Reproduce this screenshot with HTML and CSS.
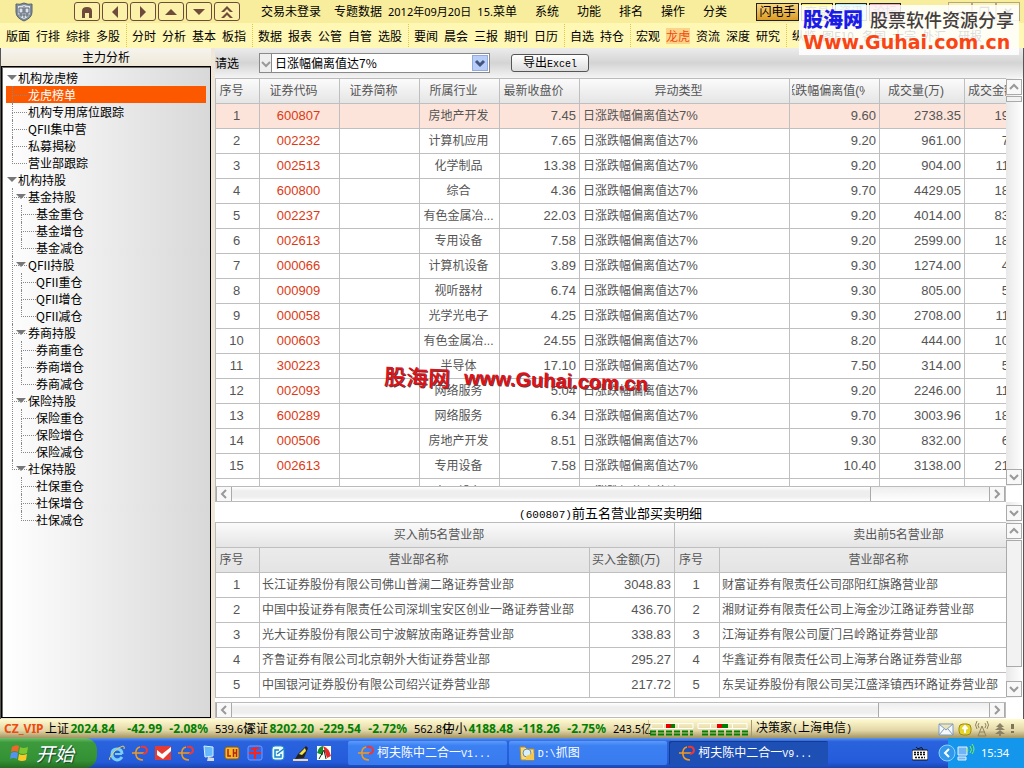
FILE: index.html
```html
<!DOCTYPE html>
<html lang="zh-CN">
<head>
<meta charset="utf-8">
<title>主力分析</title>
<link rel="stylesheet" href="styles.css">
</head>
<body>
<div class="app">
<header class="topbar">
  <svg class="shield" viewBox="0 0 20 20"><path d="M2 2Q6 3 10 1q4 2 8 1v8q0 6-8 9Q2 16 2 10z" fill="#7f8d9b" stroke="#59636f"/><path d="M4 4q4 0 6-1 3 1 6 1v6q0 5-6 7-6-2-6-7z" fill="#dde3ea"/><path d="M5 6h4v5H5zM11 6h4v5h-4zM7 11v4M13 11v4M5 13h10M10 4v12" fill="none" stroke="#5b6775"/></svg>
  <nav class="navbuttons">
    <button aria-label="首页"><svg viewBox="0 0 24 16"><path d="M7 14V7q0-4 5-4t5 4v7h-3V9h-4v5z"/></svg></button>
    <button aria-label="后退"><svg viewBox="0 0 24 16"><path d="M15 2v12L9 8z"/></svg></button>
    <button aria-label="前进"><svg viewBox="0 0 24 16"><path d="M9 2v12l6-6z"/></svg></button>
    <button aria-label="上翻"><svg viewBox="0 0 24 16"><path d="M6 11h12l-6-6z"/></svg></button>
    <button aria-label="下翻"><svg viewBox="0 0 24 16"><path d="M6 5h12l-6 6z"/></svg></button>
    <button aria-label="顶部"><svg viewBox="0 0 24 16"><path d="M6 8l6-6 6 6h-3l-3-3-3 3zM6 14l6-6 6 6h-3l-3-3-3 3z"/></svg></button>
  </nav>
  <div class="notice"><span>交易未登录</span><span>专题数据</span><time>2012年09月20日</time><span>15.</span></div>
  <nav class="menu"><a href="#">菜单</a><a href="#">系统</a><a href="#">功能</a><a href="#">排名</a><a href="#">操作</a><a href="#">分类</a></nav>
  <div class="quick"><button class="flash">闪电手</button><button class="yellow">交易</button><button class="cyan">资讯</button><button class="pink">论坛</button></div>
  <div class="winbuttons"><button aria-label="最小化">–</button><button aria-label="还原">❐</button><button aria-label="关闭">✕</button></div>
</header>
<nav class="shortcuts">
  <div><a href="#">版面</a><a href="#">行排</a><a href="#">综排</a><a href="#">多股</a></div>
  <div><a href="#">分时</a><a href="#">分析</a><a href="#">基本</a><a href="#">板指</a></div>
  <div><a href="#">数据</a><a href="#">报表</a><a href="#">公管</a><a href="#">自管</a><a href="#">选股</a></div>
  <div><a href="#">要闻</a><a href="#">晨会</a><a href="#">三报</a><a href="#">期刊</a><a href="#">日历</a></div>
  <div><a href="#">自选</a><a href="#">持仓</a></div>
  <div><a href="#">宏观</a><a href="#" class="active">龙虎</a><a href="#">资流</a><a href="#">深度</a><a href="#">研究</a></div>
  <div><a href="#">纵览</a><a href="#" class="wide">图F10</a><a href="#">各国</a><a href="#">大宗</a><a href="#" class="last">外汇</a><a href="#">研报</a></div>
</nav>
<aside class="brand"><div class="brand-row"><b>股海网</b><span>股票软件资源分享</span></div><strong>Www.Guhai.com.cn</strong></aside>

<div class="body">
<aside class="side">
  <h1>主力分析</h1>
  <div class="treebox">
  <ul class="tree">
    <li><span class="node open">机构龙虎榜</span>
      <ul><li class="selected"><span class="node">龙虎榜单</span></li><li><span class="node">机构专用席位跟踪</span></li><li><span class="node">QFII集中营</span></li><li><span class="node">私募揭秘</span></li><li><span class="node">营业部跟踪</span></li></ul></li>
    <li><span class="node open">机构持股</span>
      <ul>
        <li><span class="node open">基金持股</span><ul><li><span class="node">基金重仓</span></li><li><span class="node">基金增仓</span></li><li><span class="node">基金减仓</span></li></ul></li>
        <li><span class="node open">QFII持股</span><ul><li><span class="node">QFII重仓</span></li><li><span class="node">QFII增仓</span></li><li><span class="node">QFII减仓</span></li></ul></li>
        <li><span class="node open">券商持股</span><ul><li><span class="node">券商重仓</span></li><li><span class="node">券商增仓</span></li><li><span class="node">券商减仓</span></li></ul></li>
        <li><span class="node open">保险持股</span><ul><li><span class="node">保险重仓</span></li><li><span class="node">保险增仓</span></li><li><span class="node">保险减仓</span></li></ul></li>
        <li><span class="node open">社保持股</span><ul><li><span class="node">社保重仓</span></li><li><span class="node">社保增仓</span></li><li><span class="node">社保减仓</span></li></ul></li>
      </ul></li>
  </ul>
  </div>
</aside>

<main class="main">
  <form class="filter">
    <label for="rule">请选</label>
    <div class="combo"><span class="stub"><svg viewBox="0 0 11 18"><path d="M2 8l4 4 4-4" fill="none" stroke="#999" stroke-width="2"/></svg></span>
    <select id="rule"><option>日涨幅偏离值达7%</option></select>
    <span class="drop"><svg viewBox="0 0 14 14"><path d="M3 5l4 4 4-4" fill="none" stroke="#40557f" stroke-width="3"/></svg></span></div>
    <button type="button">导出<span class="m">Excel</span></button>
  </form>

  <section class="pane upper">
    <div class="clip">
    <table class="grid">
      <colgroup><col class="w44"><col class="w80"><col class="w80"><col class="w80"><col class="w80"><col class="w210"><col class="w90"><col class="w85"><col class="w48"></colgroup>
      <thead><tr><th>序号</th><th>证券代码</th><th>证券简称</th><th>所属行业</th><th>最新收盘价</th><th>异动类型</th><th><div class="crop">涨跌幅偏离值(%)</div></th><th>成交量(万)</th><th class="start">成交金额</th></tr></thead>
      <tbody>
      <tr class="current"><td>1</td><td>600807</td><td></td><td>房地产开发</td><td>7.45</td><td>日涨跌幅偏离值达<i>7%</i></td><td>9.60</td><td>2738.35</td><td>19</td></tr>
      <tr><td>2</td><td>002232</td><td></td><td>计算机应用</td><td>7.65</td><td>日涨跌幅偏离值达<i>7%</i></td><td>9.20</td><td>961.00</td><td>7</td></tr>
      <tr><td>3</td><td>002513</td><td></td><td>化学制品</td><td>13.38</td><td>日涨跌幅偏离值达<i>7%</i></td><td>9.20</td><td>904.00</td><td>11</td></tr>
      <tr><td>4</td><td>600800</td><td></td><td>综合</td><td>4.36</td><td>日涨跌幅偏离值达<i>7%</i></td><td>9.70</td><td>4429.05</td><td>18</td></tr>
      <tr><td>5</td><td>002237</td><td></td><td>有色金属冶...</td><td>22.03</td><td>日涨跌幅偏离值达<i>7%</i></td><td>9.20</td><td>4014.00</td><td>83</td></tr>
      <tr><td>6</td><td>002613</td><td></td><td>专用设备</td><td>7.58</td><td>日涨跌幅偏离值达<i>7%</i></td><td>9.20</td><td>2599.00</td><td>18</td></tr>
      <tr><td>7</td><td>000066</td><td></td><td>计算机设备</td><td>3.89</td><td>日涨跌幅偏离值达<i>7%</i></td><td>9.30</td><td>1274.00</td><td>4</td></tr>
      <tr><td>8</td><td>000909</td><td></td><td>视听器材</td><td>6.74</td><td>日涨跌幅偏离值达<i>7%</i></td><td>9.30</td><td>805.00</td><td>5</td></tr>
      <tr><td>9</td><td>000058</td><td></td><td>光学光电子</td><td>4.25</td><td>日涨跌幅偏离值达<i>7%</i></td><td>9.30</td><td>2708.00</td><td>11</td></tr>
      <tr><td>10</td><td>000603</td><td></td><td>有色金属冶...</td><td>24.55</td><td>日涨跌幅偏离值达<i>7%</i></td><td>8.20</td><td>444.00</td><td>10</td></tr>
      <tr><td>11</td><td>300223</td><td></td><td>半导体</td><td>17.10</td><td>日涨跌幅偏离值达<i>7%</i></td><td>7.50</td><td>314.00</td><td>5</td></tr>
      <tr><td>12</td><td>002093</td><td></td><td>网络服务</td><td>5.04</td><td>日涨跌幅偏离值达<i>7%</i></td><td>9.20</td><td>2246.00</td><td>11</td></tr>
      <tr><td>13</td><td>600289</td><td></td><td>网络服务</td><td>6.34</td><td>日涨跌幅偏离值达<i>7%</i></td><td>9.70</td><td>3003.96</td><td>18</td></tr>
      <tr><td>14</td><td>000506</td><td></td><td>房地产开发</td><td>8.51</td><td>日涨跌幅偏离值达<i>7%</i></td><td>9.30</td><td>832.00</td><td>6</td></tr>
      <tr><td>15</td><td>002613</td><td></td><td>专用设备</td><td>7.58</td><td>日涨跌幅偏离值达<i>7%</i></td><td>10.40</td><td>3138.00</td><td>21</td></tr>
      <tr><td></td><td></td><td></td><td>专用设备</td><td></td><td>日涨跌幅偏离值达</td><td></td><td></td><td></td></tr>
      </tbody>
    </table>
    </div>
    <div class="vbar"><span class="cap"><svg viewBox="0 0 14 14"><path d="M3 9l4-4 4 4"/></svg></span><span class="thumb short"></span><span class="cap end"><svg viewBox="0 0 14 14"><path d="M3 5l4 4 4-4"/></svg></span></div>
    <div class="mark"><b>股海网</b><strong>www.Guhai.com.cn</strong></div>
  </section>
  <div class="hbar"><span class="cap"><svg viewBox="0 0 14 14"><path d="M9 3L5 7l4 4"/></svg></span><span class="thumb first"></span><span class="cap end"><svg viewBox="0 0 14 14"><path d="M5 3l4 4-4 4"/></svg></span></div>
  <div class="caption"><h2><span class="m">(600807)</span>前五名营业部买卖明细</h2><div class="vbar"><span class="cap end"><svg viewBox="0 0 14 14"><path d="M3 5l4 4 4-4"/></svg></span></div></div>
  <section class="pane lower">
    <div class="clip">
    <table class="grid detail">
      <colgroup><col class="w44"><col class="w330"><col class="w85"><col class="w45"><col class="w330"><col class="w85"></colgroup>
      <thead><tr><th colspan="3">买入前5名营业部</th><th colspan="3">卖出前5名营业部</th></tr>
      <tr class="sub"><th>序号</th><th>营业部名称</th><th>买入金额(万)</th><th>序号</th><th>营业部名称</th><th></th></tr></thead>
      <tbody>
      <tr><td>1</td><td>长江证券股份有限公司佛山普澜二路证券营业部</td><td>3048.83</td><td>1</td><td>财富证券有限责任公司邵阳红旗路营业部</td><td></td></tr>
      <tr><td>2</td><td>中国中投证券有限责任公司深圳宝安区创业一路证券营业部</td><td>436.70</td><td>2</td><td>湘财证券有限责任公司上海金沙江路证券营业部</td><td></td></tr>
      <tr><td>3</td><td>光大证券股份有限公司宁波解放南路证券营业部</td><td>338.83</td><td>3</td><td>江海证券有限公司厦门吕岭路证券营业部</td><td></td></tr>
      <tr><td>4</td><td>齐鲁证券有限公司北京朝外大街证券营业部</td><td>295.27</td><td>4</td><td>华鑫证券有限责任公司上海茅台路证券营业部</td><td></td></tr>
      <tr><td>5</td><td>中国银河证券股份有限公司绍兴证券营业部</td><td>217.72</td><td>5</td><td>东吴证券股份有限公司吴江盛泽镇西环路证券营业部</td><td></td></tr>
      </tbody>
    </table>
    </div>
    <div class="vbar"><span class="cap"><svg viewBox="0 0 14 14"><path d="M3 9l4-4 4 4"/></svg></span><span class="thumb long"></span><span class="cap end"><svg viewBox="0 0 14 14"><path d="M3 5l4 4 4-4"/></svg></span></div>
  </section>
  <div class="hbar"><span class="cap"><svg viewBox="0 0 14 14"><path d="M9 3L5 7l4 4"/></svg></span><span class="thumb second"></span><span class="cap end"><svg viewBox="0 0 14 14"><path d="M5 3l4 4-4 4"/></svg></span></div>
</main>
</div>

<footer class="status">
  <b class="vip">CZ_VIP</b>
  <div class="quote"><span>上证</span><b class="v">2024.84</b><b class="d">-42.99</b><b class="p">-2.08%</b><span class="a">539.6亿</span></div>
  <div class="quote"><span>深证</span><b class="v">8202.20</b><b class="d">-229.54</b><b class="p">-2.72%</b><span class="a">562.8亿</span></div>
  <div class="quote"><span>中小</span><b class="v">4188.48</b><b class="d">-118.26</b><b class="p">-2.75%</b><span class="a">243.5亿</span></div>
  <svg class="meter" viewBox="0 0 104 18"><path d="M0 0v18M103.500 0v18" stroke="#a89a68"/><path d="M3 3.500h42v5H3zM15.500 3v6M30.500 3v6M50 3.500h49v5H50zM62.500 3v6M84.500 3v6" fill="none" stroke="#fff"/><path d="M18 4h5v4h-5zM69 4h5v4h-5z" fill="#e80000"/><path d="M23 4h4v4h-4zM74 4h6v4h-6z" fill="#008000"/><path d="M2 11.500h43M2 14.500h43M54 11.500h46M54 14.500h46" stroke="#008000" stroke-width="2" stroke-dasharray="6 2"/></svg>
  <span class="server">决策家<span class="m">(</span>上海电信<span class="m">)</span></span>
  <svg class="sysicons" viewBox="0 0 76 18"><path d="M1 4h14v11H1zM1 4l7 6 7-6M1 15l5-6M15 15l-5-6" fill="#f4f9ff" stroke="#7f9bc0"/><rect x="21" y="4" width="12" height="11" rx="4" fill="#e5d52a" stroke="#9a8c12"/><path d="M27 13V7M24.500 9L27 6l2.500 3" stroke="#fff" stroke-width="2" fill="none"/><path d="M44 6l-4 10h8zM42 12h5M41 3q-2 2 0 5M47 3q2 2 0 5M39 1q-3 4 0 8M49 1q3 4 0 8" fill="none" stroke="#8d8563"/><path d="M62 3l4 4h-8zM62 6l5 4H57zM62 10l5 4H57zM61 14h2v2h-2z" fill="#8b8265"/><path d="M74.500 4v5M74.500 11v2" stroke="#7d765a" stroke-width="3"/></svg>
</footer>

<div class="taskbar">
  <button class="start"><svg viewBox="0 0 20 20"><path d="M2 4q4-3 7-1L8 9Q5 7 1 9z" fill="#f3662a"/><path d="M10 4q3 2 8 0l-1 6q-4 2-8 0z" fill="#7dc832"/><path d="M1 10q4-2 7 0l-1 6q-4-2-7 0z" fill="#5591ee"/><path d="M9 11q3 2 8 0l-1 6q-4 2-8 0z" fill="#fbc926"/></svg><span>开始</span></button>
  <div class="launch">
    <svg viewBox="0 0 18 18"><path d="M14 10H7" stroke="#79cff8" stroke-width="2"/><path d="M14 13q-2 3-5 3-5-1-5-6t5-5q5 0 5 5" fill="none" stroke="#79cff8" stroke-width="3"/><path d="M2 16Q0 15 5 9T15 2q2 0 1 3" fill="none" stroke="#f1cf4c" stroke-width="1"/></svg>
    <svg viewBox="0 0 18 18"><path d="M1 9h12M9 3Q4 4 5 11q1 5 7 5" fill="none" stroke="#f09a20" stroke-width="1.500"/><path d="M10 3q5-1 6 3 0 3-4 4" fill="none" stroke="#ed3838" stroke-width="2"/></svg>
    <svg viewBox="0 0 18 18"><path d="M1 2h16v14H1z" fill="#e63b32"/><path d="M3 6l5 4 9-7v4l-8 8-6-4z" fill="#fff"/></svg>
    <svg viewBox="0 0 18 18"><path d="M1 9h12M9 3Q4 4 5 11q1 5 7 5" fill="none" stroke="#f09a20" stroke-width="1.500"/><path d="M10 3q5-1 6 3 0 3-4 4" fill="none" stroke="#ed3838" stroke-width="2"/></svg>
    <svg viewBox="0 0 18 18"><path d="M4 2l9 1v9l-8 1z" fill="#66b9fb" stroke="#d5efff"/><path d="M8 13l6 1v3H7z" fill="#d4d8df"/></svg>
    <svg viewBox="0 0 18 18"><rect x="2" y="3" width="14" height="12" rx="2" fill="#f9ba25" stroke="#865d12"/><path d="M5 5v7h3M10.500 5v8M13.500 5v8M10 9h4" stroke="#b32418" stroke-width="1.500" fill="none"/></svg>
    <svg viewBox="0 0 18 18"><rect x="2" y="2" width="14" height="14" rx="2" fill="#3568e8" stroke="#6e9bff"/><path d="M5 5l8-1M3 9h12M9 5v10" stroke="#f5241d" stroke-width="2"/></svg>
    <svg viewBox="0 0 18 18"><rect x="3" y="2" width="12" height="14" rx="3" fill="#edf9ff" stroke="#2590cd"/><path d="M10 6H6v7h6v-3M8 10l8-6" stroke="#1684c7" stroke-width="1.500" fill="none"/></svg>
    <svg viewBox="0 0 18 18"><path d="M3 15l3-5 8-8 2 2-4 10z" fill="#222"/><path d="M7 10l6-6 1 3-4 4z" fill="#f6e248"/><path d="M1 16h15" stroke="#eed5b5" stroke-width="2"/></svg>
    <svg viewBox="0 0 18 18"><path d="M2 2h14v14H2z" fill="#f5fff5"/><path d="M2 9q2-7 6-7v9z" fill="#148d2a"/><path d="M8 2q6 2 8 10l-4 2z" fill="#e92828"/><path d="M4 15l5-9 2 9" fill="none" stroke="#222"/></svg>
  </div>
  <div class="tasks">
    <button><svg viewBox="0 0 18 18"><path d="M1 9h12M9 3Q4 4 5 11q1 5 7 5" fill="none" stroke="#f09a20" stroke-width="1.500"/><path d="M10 3q5-1 6 3 0 3-4 4" fill="none" stroke="#ed3838" stroke-width="2"/></svg><span>柯夫陈中二合一<span class="m">V1...</span></span></button>
    <button><svg viewBox="0 0 18 18"><path d="M2 3h5l2 2h7v11H3z" fill="#f8db78" stroke="#b48a2d"/><circle cx="9" cy="9" r="4" fill="#d6efff" stroke="#728ba2"/><path d="M8 12l8-3v7H8z" fill="#f5c74c"/></svg><span><span class="m">D:\</span>抓图</span></button>
    <button class="pressed"><svg viewBox="0 0 18 18"><path d="M1 9h12M9 3Q4 4 5 11q1 5 7 5" fill="none" stroke="#f09a20" stroke-width="1.500"/><path d="M10 3q5-1 6 3 0 3-4 4" fill="none" stroke="#ed3838" stroke-width="2"/></svg><span>柯夫陈中二合一<span class="m">V9...</span></span></button>
  </div>
  <svg class="keyboard" viewBox="0 0 16 16"><path d="M4 2q2 3 4 1t3 2" fill="none" stroke="#111"/><rect x="0" y="5" width="16" height="10" rx="1" fill="#fff" stroke="#111"/><path d="M2 7.500h12M2 9.500h12M3 12.500h10" stroke="#111" stroke-width="1.500" stroke-dasharray="2 1"/></svg>
  <div class="tray"><svg viewBox="0 0 38 24"><circle cx="9" cy="12" r="8" fill="#3298ec" stroke="#8dd1ff"/><path d="M11 8l-4 4 4 4" fill="none" stroke="#fff" stroke-width="2"/><path d="M20 6h9v8h-9zM20 16h8v3h-8z" fill="#71b4f6" stroke="#e5f1ff"/><path d="M29 7q2 2 0 4M32 5q3 4 0 7M34 3q4 5 0 10" fill="none" stroke="#80f542"/></svg><time>15:34</time></div>
</div>
</div>
</body>
</html>
```
FILE: styles.css
```css
* { box-sizing: border-box; }
body { margin: 0; font: 12px/16px "Noto Sans CJK SC", sans-serif; color: #000; }
button, select { font: inherit; margin: 0; padding: 0; }
a { color: inherit; text-decoration: none; }
svg { display: block; flex: none; }
h1, h2 { margin: 0; font-size: 12px; font-weight: 400; }
ul { list-style: none; margin: 0; padding: 0; }
i { font-style: normal; }
.m { font-family: "Liberation Mono", monospace; font-size: 10px; }

.app { height: 100vh; min-height: 640px; display: flex; flex-direction: column; overflow: hidden; position: relative; background: #ece9d8; }

.topbar { height: 23px; flex: none; display: flex; align-items: center; background: #f8ed9c; font-family: "Noto Sans", "Noto Sans CJK SC", sans-serif; white-space: nowrap; }
.shield { width: 20px; height: 20px; margin-left: 14px; }
.navbuttons { display: flex; gap: 2px; margin-left: 40px; }
.navbuttons button { width: 26px; height: 19px; border: 1px solid #6b4e3a; border-radius: 3px; background: #fbf1a8; }
.navbuttons svg { width: 24px; height: 16px; fill: #6e4b3a; }
.notice { display: flex; margin-left: 21px; width: 232px; gap: 6px; }
.notice span:first-child { width: 67px; }
.notice time, .notice span:last-child { font-size: 11px; }
.menu { display: flex; }
.menu a { width: 42px; }
.quick { display: flex; gap: 2px; margin-left: 11px; }
.quick button { height: 18px; width: 32px; border: 1px solid #222; line-height: 14px; color: #555; }
.quick .flash { width: 43px; background: linear-gradient(#f8d57e, #dc9b25); color: #000; white-space: nowrap; }
.quick .yellow { background: #fff04a; }
.quick .cyan { background: #aeeefa; }
.quick .pink { background: #f6a8b8; }
.winbuttons { display: flex; margin-left: auto; padding-right: 4px; }
.winbuttons button { width: 24px; height: 19px; border: 1px solid #b5a878; background: #faf1b4; line-height: 14px; }

.shortcuts { height: 25px; flex: none; display: flex; align-items: center; background: #fff7b4; white-space: nowrap; }
.shortcuts div { display: flex; align-items: center; height: 23px; border-left: 1px dotted #e4c640; padding-left: 5px; }
.shortcuts div:first-child { border-left: 0; padding-left: 6px; }
.shortcuts a { width: 30px; }
.shortcuts .wide { width: 40px; }
.shortcuts .last { width: 36px; }
.shortcuts .active { color: #f04a10; background: #fbd48a; width: 24px; margin-right: 6px; }

.brand { position: absolute; top: 5px; right: 5px; width: 220px; height: 50px; padding: 1px 4px; background: rgba(255, 255, 255, .86); white-space: nowrap; }
.brand-row { display: flex; align-items: center; height: 25px; gap: 7px; }
.brand b { font-size: 20px; color: #1c1ce8; font-weight: 900; }
.brand span { font-size: 18px; font-weight: 500; color: #443d3d; }
.brand strong { display: block; font: bold 19px/22px "DejaVu Sans", sans-serif; color: #fa4414; }

.body { flex: 1; min-height: 0; display: flex; border-left: 1px solid #555; border-right: 1px solid #555; }
.side { width: 214px; flex: none; display: flex; flex-direction: column; background: #efe8d8; padding-right: 4px; }
.side h1 { height: 18px; line-height: 18px; text-align: center; background: linear-gradient(#f6f4ee, #efe8d8); }
.treebox { flex: 1; border: 1px solid #000; box-shadow: inset 1px 1px #716f64; padding: 2px 4px; margin-bottom: 1px; background: linear-gradient(90deg, #fff, #d8d8d8); overflow: hidden; }
.tree { line-height: 17px; }
.tree li { position: relative; }
.tree .node { display: block; height: 17px; padding-left: 12px; position: relative; white-space: nowrap; }
.tree ul .node { padding-left: 22px; }
.tree ul ul .node { padding-left: 30px; }
.tree .open::after { content: ""; position: absolute; left: 1px; top: 6px; border: 5px solid transparent; border-top-color: #777; border-bottom: 0; }
.tree ul .open::after { left: 10px; }
.tree ul > li::before { content: ""; position: absolute; left: 6px; top: 0; width: 14px; height: 9px; border-left: 1px dotted #888; border-bottom: 1px dotted #888; z-index: 1; }
.tree ul > li:not(:last-child)::after { content: ""; position: absolute; left: 6px; top: 9px; bottom: 0; border-left: 1px dotted #888; }
.tree ul ul > li::before, .tree ul ul > li:not(:last-child)::after { left: 15px; }
.tree .selected .node { background: #fc5800; color: #fff; }

.main { flex: 1; min-width: 0; display: flex; flex-direction: column; background: #fff; padding-bottom: 1px; }
.filter { height: 30px; flex: none; display: flex; align-items: center; background: linear-gradient(#ececec, #d4d4d4 50%, #f4f4f4); }
.filter label { width: 44px; }
.combo { width: 231px; height: 20px; border: 1px solid #8a8a8a; display: flex; background: #fff; position: relative; }
.stub { width: 12px; border-right: 1px solid #8a8a8a; background: #eee; }
.stub svg { width: 11px; height: 18px; }
.combo select { flex: 1; appearance: none; border: 0; background: transparent; padding-left: 3px; font-family: "Noto Sans CJK SC", sans-serif; }
.drop { position: absolute; right: 1px; top: 1px; width: 16px; height: 16px; background: #b9cdf8; border: 1px solid #91abdf; pointer-events: none; }
.drop svg { width: 14px; height: 14px; }
.filter button { width: 78px; height: 18px; margin-left: 21px; border: 1px solid #555; border-radius: 3px; background: linear-gradient(#fff, #ddd); line-height: 14px; }

.pane { display: flex; position: relative; min-height: 0; }
.upper { flex: 1; }
.clip { flex: 1; min-width: 0; overflow: hidden; border-top: 1px solid #bbb; border-left: 1px solid #bbb; }
.grid { table-layout: fixed; width: 0; border-collapse: separate; border-spacing: 0; color: #555; }
.w44 { width: 44px; } .w45 { width: 45px; } .w48 { width: 48px; } .w80 { width: 80px; } .w85 { width: 85px; } .w90 { width: 90px; } .w210 { width: 210px; } .w330 { width: 330px; }
.grid th, .grid td { height: 25px; padding: 0 4px 0 2px; border-right: 1px solid #bfbfbf; border-bottom: 1px solid #bfbfbf; white-space: nowrap; text-align: center; font-weight: 400; line-height: 16px; }
.grid th { padding-right: 14px; background: linear-gradient(#fbfbfb, #e5e5e6); font-family: "Liberation Sans", "Noto Sans CJK SC", sans-serif; }
.grid .sub th { background: linear-gradient(#ebebec, #e4e4e5); }
.grid .start { text-align: left; padding-left: 3px; padding-right: 0; }
.crop { display: flex; justify-content: center; overflow: hidden; }
.grid td, .grid i { font-family: "Liberation Sans", "Noto Sans CJK SC", sans-serif; font-size: 13px; }
.grid td:nth-child(4), .grid td:nth-child(6) { font-size: 12px; }
.grid td:nth-child(2) { color: #dc3912; }
.grid td:nth-child(5), .grid td:nth-child(7), .grid td:nth-child(8), .grid td:nth-child(9) { text-align: right; padding-right: 3px; }
.grid td:nth-child(6) { text-align: left; padding-left: 3px; }
.grid .current td { background: #fde4da; }
.grid:not(.detail) tr:last-child td { padding-top: 2px; }
.grid.detail td:nth-child(2), .grid.detail td:nth-child(5) { text-align: left; color: #555; font-size: 12px; padding-right: 0; }
.grid.detail td:nth-child(3) { text-align: right; padding-right: 3px; }
.grid.detail td:nth-child(4) { font-size: 13px; }

.vbar { width: 17px; flex: none; display: flex; flex-direction: column; padding: 1px 1px 1px 0; background: linear-gradient(90deg, #e8e8e8, #fff); }
.hbar { height: 16px; flex: none; display: flex; margin-right: 17px; border: 1px solid #bbb; background: linear-gradient(#eee, #fff); }
.cap { width: 16px; height: 16px; flex: none; border: 1px solid #aaa; background: #f8f8f8; }
.hbar .cap { width: 16px; height: 14px; border-width: 0 1px; }
.cap svg { width: 14px; height: 14px; fill: none; stroke: #999; stroke-width: 2; }
.vbar .end { margin-top: auto; }
.hbar .end { margin-left: auto; }
.thumb { border: 1px solid #aaa; background: #f2f2f2; }
.vbar .thumb { margin-top: 1px; }
.short { height: 6px; }
.long { height: 73%; }
.hbar .thumb { border-width: 0 1px 0 0; background: linear-gradient(#fff, #eee 30%, #eee 70%, #fff); }
.first { width: 81%; }
.second { width: 82%; }
.caption { height: 20px; flex: none; display: flex; }
.caption h2 { flex: 1; text-align: center; line-height: 22px; font-size: 13px; }
.caption .m { font-size: 11px; }
.lower { flex: none; }
.lower + .hbar { margin-top: 4px; }

.mark { position: absolute; left: 169px; top: 287px; display: flex; align-items: center; gap: 14px; color: #e01018; white-space: nowrap; transform: rotate(2deg); text-shadow: 1px 1px #633; }
.mark b { font-size: 22px; line-height: 28px; font-weight: 500; }
.mark strong { font: bold 20px/28px "Liberation Sans", sans-serif; }

.status { height: 19px; flex: none; display: flex; align-items: center; padding: 0 10px 0 4px; background: linear-gradient(#fffbd0, #e3d6a7 60%, #a39561); white-space: nowrap; font-family: "Noto Sans", "Noto Sans CJK SC", sans-serif; }
.vip { width: 41px; color: #f04a10; }
.quote { width: 199px; display: flex; flex: none; }
.quote > :first-child { width: 24px; }
.quote b { color: #008000; text-align: right; }
.quote .v { width: 46px; }
.quote .d { width: 47px; }
.quote .p { width: 46px; }
.quote .a { width: 36px; padding-left: 7px; font-size: 11px; }
.meter { width: 104px; height: 18px; margin-left: 6px; }
.server { margin-left: 4px; }
.sysicons { width: 76px; height: 18px; margin-left: auto; }

.taskbar { height: 30px; flex: none; display: flex; align-items: center; background: linear-gradient(#5a93f0, #2a63dd 12%, #245bdb 80%, #1a45ae); color: #fff; white-space: nowrap; }
.taskbar button { color: #fff; border: 0; display: flex; align-items: center; }
.taskbar .start { width: 97px; height: 30px; padding-left: 10px; gap: 6px; border-radius: 0 12px 12px 0; background: linear-gradient(#6fbe6b, #3c9a3c 15%, #349034 75%, #246d24); font-size: 19px; font-style: italic; text-shadow: 1px 1px 1px #143; }
.start svg { width: 20px; height: 20px; }
.launch { display: flex; gap: 5px; margin-left: 11px; }
.launch svg { width: 18px; height: 18px; }
.tasks { display: flex; gap: 2px; margin-left: 15px; width: 480px; }
.tasks button { flex: 1; height: 24px; padding-left: 9px; gap: 2px; border-radius: 2px; background: linear-gradient(#5a9bfb, #3b80f3 20%, #397bef); }
.tasks svg { width: 18px; height: 18px; }
.tasks .pressed { background: #1e4fb5; box-shadow: inset 1px 1px #163a8c; }
.keyboard { width: 16px; height: 16px; margin-left: auto; }
.tray { width: 86px; height: 30px; margin-left: 10px; display: flex; align-items: center; gap: 5px; background: linear-gradient(90deg, transparent 10px, #1396ec 10px); }
.tray svg { width: 38px; height: 24px; }
.tray time { font: 11px/16px "Noto Sans", sans-serif; }
```
